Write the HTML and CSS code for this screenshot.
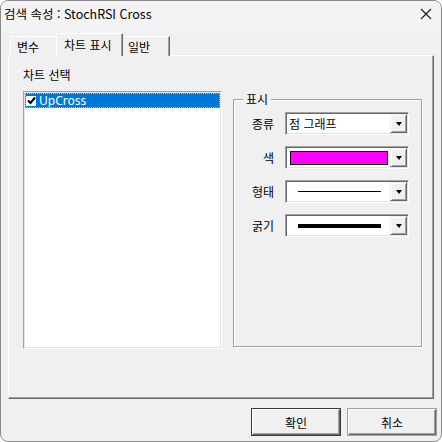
FILE: index.html
```html
<!DOCTYPE html>
<html lang="ko">
<head>
<meta charset="utf-8">
<link rel="stylesheet" href="styles.css">
</head>
<body>
<div class="window">
  <div class="titlebar">
    <span class="title">검색 속성 : StochRSI Cross</span>
    <svg class="close" width="12" height="12" viewBox="0 0 12 12"><path d="M1 1 L11 11 M11 1 L1 11" stroke="#1a1a1a" stroke-width="1.1" fill="none"/></svg>
  </div>
  <div class="tabs">
    <div class="tab">변수</div>
    <div class="tab active">차트 표시</div>
    <div class="tab">일반</div>
  </div>
  <div class="panel">
    <div class="left">
      <div class="label">차트 선택</div>
      <div class="list">
        <div class="item sel">
          <span class="chk"><svg width="9" height="9" viewBox="0 0 9 9"><path d="M1 4.5 L3.5 7 L8 1.5" stroke="#000" stroke-width="2" fill="none"/></svg></span>
          <span class="item-text">UpCross</span>
        </div>
      </div>
    </div>
    <div class="group">
      <div class="group-title">표시</div>
      <div class="fields">
        <div class="flabel">종류</div>
        <div class="combo"><div class="combo-val"><span class="ctext">점 그래프</span></div><div class="drop"><span class="tri"></span></div></div>
        <div class="flabel">색</div>
        <div class="combo"><div class="combo-val"><span class="swatch"></span></div><div class="drop"><span class="tri"></span></div></div>
        <div class="flabel">형태</div>
        <div class="combo"><div class="combo-val"><span class="line thin"></span></div><div class="drop"><span class="tri"></span></div></div>
        <div class="flabel">굵기</div>
        <div class="combo"><div class="combo-val"><span class="line thick"></span></div><div class="drop"><span class="tri"></span></div></div>
      </div>
    </div>
  </div>
  <div class="footer">
    <button class="btn default">확인</button>
    <button class="btn">취소</button>
  </div>
</div>
</body>
</html>
```

FILE: styles.css
```css
html, body {
  margin: 0;
  padding: 0;
  background: #ffffff;
}
body {
  font-family: "Noto Sans CJK KR", "Noto Sans", sans-serif;
  font-size: 12px;
  color: #000;
}
.window {
  width: 442px;
  height: 442px;
  box-sizing: border-box;
  border: 1px solid #8a8a8a;
  border-radius: 8px;
  background: #f0f0f0;
  overflow: hidden;
  display: flex;
  flex-direction: column;
}
.titlebar {
  height: 32px;
  flex: none;
  display: flex;
  align-items: flex-start;
  justify-content: space-between;
  padding: 4px 9px 0 3px;
  box-sizing: border-box;
  background: #f3f3f3;
}
.title {
  font-size: 12.5px;
  line-height: 17px;
  color: #000;
}
.close {
  margin-top: 3px;
}
.tabs {
  display: flex;
  align-items: flex-end;
  height: 22px;
  margin: 1px 0 -1px 9px;
  flex: none;
}
.tab {
  position: relative;
  height: 20px;
  box-sizing: border-box;
  border-top: 1px solid #ffffff;
  border-left: 1px solid #ffffff;
  border-right: 1px solid #696969;
  box-shadow: inset -1px 0 0 #a0a0a0;
  background: #f0f0f0;
  line-height: 18px;
  padding: 1px 6px 0;
  font-size: 12px;
}
.tab:first-child {
  width: 48px;
}
.tab:last-child {
  width: 49px;
}
.tab.active {
  height: 23px;
  width: 67px;
  margin: 0 -2px;
  z-index: 1;
  padding-left: 7px;
  line-height: 20px;
}
.panel {
  flex: none;
  height: 344px;
  width: 426px;
  margin-left: 7px;
  box-sizing: border-box;
  border-top: 1px solid #ffffff;
  border-left: 1px solid #ffffff;
  border-right: 1px solid #696969;
  border-bottom: 1px solid #696969;
  box-shadow: inset -1px -1px 0 #a0a0a0;
  padding: 11px 0 0 14px;
  display: flex;
  align-items: flex-start;
  gap: 11px;
}
.left {
  width: 199px;
  display: flex;
  flex-direction: column;
}
.label {
  line-height: 15px;
  height: 15px;
  margin-bottom: 9px;
}
.list {
  height: 258px;
  box-sizing: border-box;
  background: #ffffff;
  border-top: 1px solid #a0a0a0;
  border-left: 1px solid #a0a0a0;
  border-right: 1px solid #ffffff;
  border-bottom: 1px solid #ffffff;
  box-shadow: inset 1px 1px 0 #e3e3e3, inset -1px -1px 0 #e3e3e3;
  padding: 1px;
}
.item {
  height: 15px;
  display: flex;
  align-items: center;
  box-sizing: border-box;
}
.item.sel {
  background: #0078d7;
  outline: 1px dotted #9cc8ee;
  outline-offset: -1px;
}
.chk {
  width: 10px;
  height: 10px;
  background: #ffffff;
  margin-left: 1px;
  display: flex;
  align-items: center;
  justify-content: center;
}
.item-text {
  color: #ffffff;
  margin-left: 3px;
  font-family: "Noto Sans", "Noto Sans CJK KR", sans-serif;
  font-size: 12px;
  line-height: 15px;
}
.group {
  margin-top: 32px;
  width: 189px;
  height: 248px;
  box-sizing: border-box;
  border: 1px solid #a0a0a0;
  box-shadow: inset 1px 1px 0 #ffffff, 1px 1px 0 #ffffff;
}
.group-title {
  display: table;
  margin: -8px 0 0 9px;
  padding: 0 3px;
  background: #f0f0f0;
  line-height: 14px;
  height: 14px;
}
.fields {
  display: grid;
  grid-template-columns: 34px 124px;
  grid-auto-rows: 23px;
  column-gap: 11px;
  row-gap: 11px;
  padding-left: 6px;
  margin-top: 6px;
}
.flabel {
  text-align: right;
  line-height: 23px;
}
.combo {
  display: flex;
  box-sizing: border-box;
  background: #ffffff;
  border-top: 1px solid #a0a0a0;
  border-left: 1px solid #a0a0a0;
  border-right: 1px solid #ffffff;
  border-bottom: 1px solid #ffffff;
  box-shadow: inset 1px 1px 0 #696969, inset -1px -1px 0 #e3e3e3;
  padding: 1px;
}
.combo-val {
  flex: 1;
  display: flex;
  align-items: center;
  padding-left: 2px;
}
.ctext {
  line-height: 19px;
}
.swatch {
  width: 98px;
  height: 14px;
  box-sizing: border-box;
  border: 1px solid #000;
  background: #ff00ff;
  margin-left: 1px;
}
.line {
  display: block;
  width: 83px;
  margin-left: 9px;
  background: #000;
}
.line.thin {
  height: 1px;
}
.line.thick {
  height: 4px;
}
.drop {
  width: 17px;
  box-sizing: border-box;
  background: #f0f0f0;
  border-top: 1px solid #f0f0f0;
  border-left: 1px solid #f0f0f0;
  border-right: 1px solid #696969;
  border-bottom: 1px solid #696969;
  box-shadow: inset 1px 1px 0 #ffffff, inset -1px -1px 0 #a0a0a0;
  display: flex;
  align-items: center;
  justify-content: center;
}
.tri {
  width: 0;
  height: 0;
  border-left: 3.5px solid transparent;
  border-right: 3.5px solid transparent;
  border-top: 4px solid #000;
  margin-top: 1px;
}
.footer {
  display: flex;
  justify-content: flex-end;
  gap: 8px;
  padding: 10px 5px 0 0;
}
.btn {
  width: 88px;
  height: 26px;
  box-sizing: border-box;
  font-family: "Noto Sans CJK KR", "Noto Sans", sans-serif;
  font-size: 12px;
  background: #f0f0f0;
  color: #000;
  border-top: 1px solid #ffffff;
  border-left: 1px solid #ffffff;
  border-right: 1px solid #696969;
  border-bottom: 1px solid #696969;
  box-shadow: inset -1px -1px 0 #a0a0a0;
  padding: 0;
  margin: 0;
  outline: 1px solid #a0a0a0;
  outline-offset: 0;
}
.btn.default {
  outline: 1px solid #3a3a3a;
}
```
